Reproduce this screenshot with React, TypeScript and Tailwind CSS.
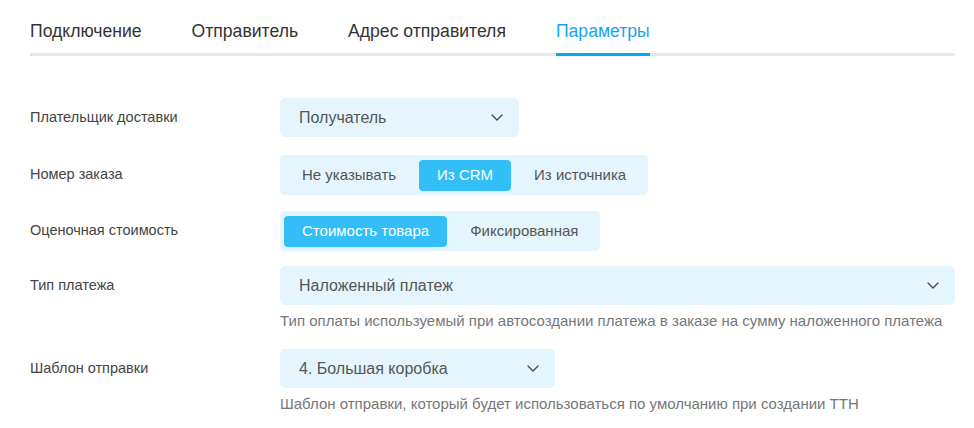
import { useState } from "react";

const tabs = ["Подключение", "Отправитель", "Адрес отправителя", "Параметры"];

function Chevron() {
  return (
    <svg width="12" height="7" viewBox="0 0 12 7" fill="none" className="shrink-0">
      <path d="M1 1l5 5 5-5" stroke="#444" strokeWidth="1.3" strokeLinecap="round" strokeLinejoin="round" />
    </svg>
  );
}

function Select({ value, className }: { value: string; className: string }) {
  return (
    <button
      type="button"
      className={`flex h-[39px] items-center justify-between rounded-[5px] bg-[#e5f5fd] pl-[19px] pr-[16px] text-left text-[16px] text-[#555] ${className}`}
    >
      <span>{value}</span>
      <Chevron />
    </button>
  );
}

function Segmented({ options, active }: { options: string[]; active: number }) {
  const [sel, setSel] = useState(active);
  return (
    <div className="flex h-[40px] items-center gap-[5px] rounded-[5px] bg-[#e5f5fd] p-[4px]">
      {options.map((o, i) => (
        <button
          key={o}
          type="button"
          onClick={() => setSel(i)}
          className={
            i === sel
              ? "h-[31px] rounded-[4px] bg-[#34bef8] px-[18px] text-[15px] text-white"
              : "h-[31px] rounded-[4px] px-[18px] text-[15px] text-[#555]"
          }
        >
          {o}
        </button>
      ))}
    </div>
  );
}

function Row({ label, children, className = "" }: { label: string; children: React.ReactNode; className?: string }) {
  return (
    <div className={`flex items-start ${className}`}>
      <div className="flex h-[39px] w-[250px] shrink-0 items-center text-[14.5px] text-[#444]">{label}</div>
      <div className="min-w-0 flex-1">{children}</div>
    </div>
  );
}

export default function App() {
  const [tab, setTab] = useState(3);
  return (
    <div className="min-h-[428px] bg-white pl-[30px] pr-[19px] font-['Liberation_Sans',Arial,sans-serif]">
      <div className="flex gap-[50px] border-b-[3px] border-[#e4e7ef]">
        {tabs.map((t, i) => (
          <button
            key={t}
            type="button"
            onClick={() => setTab(i)}
            className={
              i === tab
                ? "-mb-[3px] border-b-[3px] border-[#00a9f4] pt-[20px] pb-[11px] text-[17.6px] leading-[22px] text-[#17a5ee]"
                : "pt-[20px] pb-[11px] text-[17.6px] leading-[22px] text-[#333]"
            }
          >
            {t}
          </button>
        ))}
      </div>

      <div className="pt-[42px]">
        <Row label="Плательщик доставки">
          <Select value="Получатель" className="w-[239px]" />
        </Row>
        <Row label="Номер заказа" className="mt-[18px]">
          <div className="flex">
            <Segmented options={["Не указывать", "Из CRM", "Из источника"]} active={1} />
          </div>
        </Row>
        <Row label="Оценочная стоимость" className="mt-[16px]">
          <div className="flex">
            <Segmented options={["Стоимость товара", "Фиксированная"]} active={0} />
          </div>
        </Row>
        <Row label="Тип платежа" className="mt-[15px]">
          <Select value="Наложенный платеж" className="w-full" />
          <p className="mt-[6px] text-[15px] leading-[20px] text-[#777]">
            Тип оплаты используемый при автосоздании платежа в заказе на сумму наложенного платежа
          </p>
        </Row>
        <Row label="Шаблон отправки" className="mt-[18px]">
          <Select value="4. Большая коробка" className="w-[275px]" />
          <p className="mt-[6px] text-[15px] leading-[20px] text-[#777]">
            Шаблон отправки, который будет использоваться по умолчанию при создании ТТН
          </p>
        </Row>
      </div>
    </div>
  );
}
